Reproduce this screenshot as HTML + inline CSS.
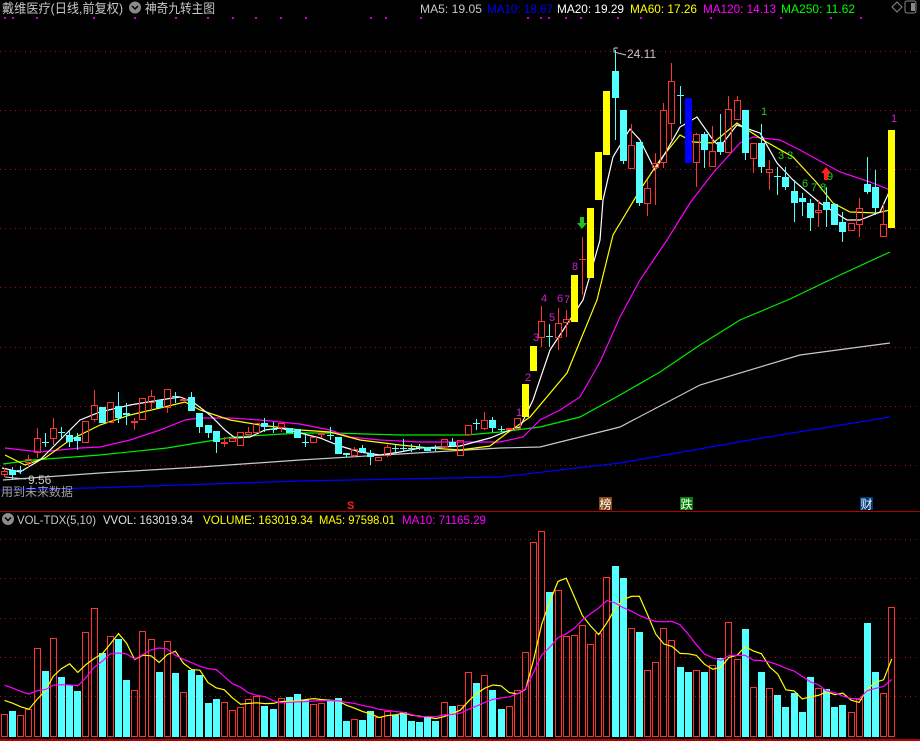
<!DOCTYPE html>
<html><head><meta charset="utf-8">
<style>
html,body{margin:0;padding:0;background:#000;width:920px;height:741px;overflow:hidden}
svg{display:block}
text{font-family:"Liberation Sans","Noto Sans CJK SC",sans-serif}
</style></head>
<body>
<svg id="s" width="920" height="741" xmlns="http://www.w3.org/2000/svg">
<rect width="920" height="741" fill="#000"/>
<g id="g"></g>
<!-- header -->
<text x="2" y="13" font-size="13" fill="#c8c8c8" textLength="121" lengthAdjust="spacingAndGlyphs">戴维医疗(日线,前复权)</text>
<circle cx="135" cy="7.5" r="6" fill="#8a8a8a"/><path d="M132 6 L135 9 L138 6" stroke="#000" stroke-width="1.5" fill="none"/>
<text x="145" y="13" font-size="13" fill="#c8c8c8" textLength="70" lengthAdjust="spacingAndGlyphs">神奇九转主图</text>
<text x="420" y="13" font-size="12" fill="#c8c8c8" textLength="62" lengthAdjust="spacingAndGlyphs">MA5: 19.05</text>
<text x="487" y="13" font-size="12" fill="#0000ff" textLength="66" lengthAdjust="spacingAndGlyphs">MA10: 18.67</text>
<text x="557" y="13" font-size="12" fill="#ffffff" textLength="67" lengthAdjust="spacingAndGlyphs">MA20: 19.29</text>
<text x="630" y="13" font-size="12" fill="#ffff00" textLength="67" lengthAdjust="spacingAndGlyphs">MA60: 17.26</text>
<text x="703" y="13" font-size="12" fill="#ff00ff" textLength="73" lengthAdjust="spacingAndGlyphs">MA120: 14.13</text>
<text x="781" y="13" font-size="12" fill="#00ff00" textLength="74" lengthAdjust="spacingAndGlyphs">MA250: 11.62</text>
<path d="M892 7 L897 2 L902 7 L897 12 Z" stroke="#888" fill="none"/>
<rect x="905" y="1" width="11" height="12" rx="2" stroke="#888" fill="none"/><rect x="911" y="3" width="4" height="8" fill="#888"/>
<!-- labels -->
<text x="627" y="58" font-size="12" fill="#c8c8c8">24.11</text>
<path d="M614 52 L626 55 M614 48 L618 48 M614 48 L614 52" stroke="#c8c8c8" fill="none"/>
<text x="28" y="484" font-size="12" fill="#c8c8c8">9.56</text>
<path d="M5 477 L26 479" stroke="#c8c8c8"/>
<text x="1" y="496" font-size="12" fill="#a0a0a0">用到未来数据</text>
<text x="347" y="509" font-size="11" fill="#ff2020" font-weight="bold">S</text>
<rect x="599" y="497" width="13" height="13" fill="#8b4a14"/><text x="599.5" y="508.5" font-size="12" fill="#fff">榜</text>
<rect x="680" y="497" width="13" height="13" fill="#008000"/><text x="680.5" y="508.5" font-size="12" fill="#fff">跌</text>
<rect x="860" y="497" width="13" height="13" fill="#003a78"/><text x="860.5" y="508.5" font-size="12" fill="#fff">财</text>
<line x1="0" y1="511.5" x2="920" y2="511.5" stroke="#b00000"/>
<circle cx="8" cy="519" r="6" fill="#8a8a8a"/><path d="M5 517.5 L8 520.5 L11 517.5" stroke="#000" stroke-width="1.5" fill="none"/>
<text x="17" y="524" font-size="12" fill="#c8c8c8" textLength="79" lengthAdjust="spacingAndGlyphs">VOL-TDX(5,10)</text>
<text x="103" y="524" font-size="12" fill="#e0e0e0" textLength="90" lengthAdjust="spacingAndGlyphs">VVOL: 163019.34</text>
<text x="203" y="524" font-size="12" fill="#ffff00" textLength="110" lengthAdjust="spacingAndGlyphs">VOLUME: 163019.34</text>
<text x="319" y="524" font-size="12" fill="#ffff00" textLength="76" lengthAdjust="spacingAndGlyphs">MA5: 97598.01</text>
<text x="402" y="524" font-size="12" fill="#ff00ff" textLength="84" lengthAdjust="spacingAndGlyphs">MA10: 71165.29</text>
<line x1="0" y1="740" x2="920" y2="740" stroke="#b00000" stroke-width="2"/>
<!-- signal labels -->
<g font-size="11" fill="#d020d0">
<text x="516" y="416">1</text><text x="525" y="381">2</text><text x="533" y="341">3</text>
<text x="541" y="302">4</text><text x="549" y="321">5</text><text x="557" y="302">6</text>
<text x="564" y="303">7</text><text x="572" y="270">8</text><text x="891" y="122">1</text>
</g>
<g font-size="11" fill="#20d020">
<text x="761" y="115">1</text><text x="778" y="159">3 3</text><text x="795" y="170">·</text>
<text x="802" y="187">6</text><text x="811" y="191">7 8</text><text x="827" y="180">9</text>
</g>
<path d="M826 167 L831 173 L828 173 L828 180 L824 180 L824 173 L821 173 Z" fill="#ff2020"/>
<path d="M582 229 L577 223 L580 223 L580 217 L584 217 L584 223 L587 223 Z" fill="#20c020"/>
</svg>
<script>
var NS="http://www.w3.org/2000/svg",g=document.getElementById('g');
function el(n,a){var e=document.createElementNS(NS,n);for(var k in a)e.setAttribute(k,a[k]);g.appendChild(e);return e;}
[51,110,169,228,287,347,406,465,539,578,618,657,696].forEach(function(y){el('line',{x1:0,y1:y+.5,x2:920,y2:y+.5,stroke:'#a01010','stroke-dasharray':'1 4'});});
[4,12,36,93,134,175,207,232,255,280,305,370,385,420,527,540,548,565,580,617,640,710,780,830,860].forEach(function(x){el('rect',{x:x,y:17,width:2,height:2,fill:'#d000d0'});});
function pl(pts,c){el('polyline',{points:pts.map(function(p){return p.join(',')}).join(' '),fill:'none',stroke:c,'stroke-width':1.2});}
pl([[0,490],[90,488],[300,481],[500,477],[620,463],[750,440],[890,417]],'#0000ff');
pl([[3,480],[100,473],[200,467],[300,460],[400,454],[500,448],[540,447],[620,427],[700,385],[800,355],[890,343]],'#c8c8c8');
pl([[3,464],[33,460],[100,455],[167,448],[233,437],[300,433],[333,433],[400,435],[467,435],[500,432],[540,427],[580,417],[620,395],[660,372],[700,345],[740,320],[790,299],[840,275],[890,252]],'#00ee00');
pl([[5,448],[40,452],[80,448],[100,447],[130,440],[160,430],[185,420],[200,418],[230,418],[260,420],[300,424],[330,430],[350,437],[380,440],[420,442],[460,442],[500,442],[523,437],[540,420],[560,410],[580,397],[600,362],[620,317],[640,280],[667,240],[690,203],[713,173],[740,143],[753,137],[780,140],[800,150],[840,172],[870,182],[890,190]],'#ff00ff');
pl([[5,455],[25,465],[45,458],[70,440],[100,425],[130,415],[160,408],[185,402],[200,410],[230,420],[260,425],[300,430],[330,432],[360,440],[400,445],[430,448],[460,450],[490,446],[507,433],[530,417],[567,373],[597,300],[613,235],[640,190],[660,160],[680,135],[693,142],[713,143],[737,123],[763,140],[793,157],[817,183],[833,203],[850,212],[877,213],[890,210]],'#ffff00');
pl([[2,468],[20,472],[40,460],[60,440],[80,420],[100,412],[130,405],[160,400],[180,397],[193,402],[210,415],[225,430],[235,438],[250,437],[265,430],[280,428],[300,433],[320,438],[340,446],[360,452],[380,455],[400,452],[420,448],[460,446],[490,438],[510,430],[520,427],[533,400],[550,350],[583,300],[600,240],[603,200],[613,157],[630,129],[640,140],[655,170],[667,150],[680,127],[697,117],[713,140],[720,147],[733,130],[737,125],[760,133],[777,163],[793,180],[820,203],[847,220],[860,220],[880,212],[890,190]],'#ffffff');
var C=`0 r 471 475 468 477
1 c 470 475 467 480
2 c 470 471 466 474
3 r 459 463 455 467
4 r 438 453 428 458
5 c 442 443 433 447
6 r 428 439 418 445
7 c 432 433 427 438
8 c 435 442 430 447
9 c 437 441 433 450
10 r 421 443
11 r 405 420 390 422
12 c 407 423
13 r 402 423
14 c 406 418 392 423
15 c 413 415 403 425
16 r 421 423 418 430
17 r 398 420
18 r 396 403 390 410
19 c 400 408
20 r 389 408 389 413
21 c 396 397 392 403
22 r 399 401
23 c 397 411 392 411
24 c 413 427 413 433
25 c 425 433 425 438
26 c 431 442 431 453
27 r 442 444 437 447
28 r 438 442
29 r 432 446
30 r 432 435 427 435
31 r 423 433
32 c 423 427 418 432
33 c 429 430 422 433
34 r 423 428 422 432
35 c 428 433
36 c 429 438
37 c 442 443 433 447
38 r 437 443
39 r 433 435 433 438
40 c 435 436 427 440
41 c 437 454
42 c 453 455 453 457
43 r 449 456 447 457
44 c 448 452 445 453
45 c 453 457 450 465
46 r 457 461
47 r 447 456 445 457
48 c 448 449 445 452
49 c 448 449 439 451
50 c 448 449 444 452
51 c 447 448 444 450
52 c 447 451
53 c 448 449 445 451
54 r 439 447
55 c 442 446 438 447
56 r 440 456
57 r 425 435
58 c 423 424 419 430
59 r 420 429 412 430
60 c 420 428 417 432
61 c 429 430 426 432
62 r 428 430
63 r 418 429
64 y 384 417
65 y 346 371
66 r 321 338 306 347
67 c 336 337 324 347
68 r 323 338 308 350
69 r 319 323 310 337
70 y 275 322
71 r 259 260 237 295
72 y 208 278
73 y 152 200
74 y 91 155
75 c 71 98 50 140
76 c 110 161 110 164
77 r 145 169 124 169
78 c 142 203 142 206
79 r 188 204 180 216
80 r 163 168 153 205
81 r 110 163 103 168
82 r 81 124 63 140
83 c 95 96 86 124
84 b 98 163
85 r 134 163 133 187
86 c 134 150 132 168
87 r 151 167 126 167
88 c 142 152 114 155
89 r 109 153 96 153
90 r 100 120 96 120
91 c 110 153 110 160
92 r 143 159 143 173
93 c 143 167 124 173
94 r 169 173 160 190
95 c 176 177 167 195
96 c 177 187 167 190
97 c 191 203 180 222
98 c 198 202 193 216
99 c 203 218 199 231
100 r 210 213 200 227
101 c 202 210 187 227
102 c 204 225
103 c 222 232 212 242
104 r 223 231
105 r 208 225 198 237
106 c 184 192 157 194
107 c 187 208 170 215
108 r 224 237 204 237
109 y 130 228`;
var col={r:'#ff3232',c:'#54ffff',y:'#ffff00',b:'#0000ff'};
C.split('\n').forEach(function(l){var a=l.trim().split(/\s+/);var i=+a[0],t=a[1],bt=+a[2],bb=+a[3],wt=a[4]?+a[4]:bt,wb=a[5]?+a[5]:bb;
 var x=Math.round(1+8.14*i),cx=x+3.5,c=col[t];
 if(wt<bt)el('line',{x1:cx,y1:wt,x2:cx,y2:bt,stroke:c});
 if(wb>bb)el('line',{x1:cx,y1:bb,x2:cx,y2:wb,stroke:c});
 if(t=='r'){ if(bb-bt<=2)el('rect',{x:x,y:bt,width:7,height:Math.max(1,bb-bt),fill:c});
  else el('rect',{x:x+.5,y:bt+.5,width:6,height:bb-bt-1,fill:'none',stroke:c});}
 else el('rect',{x:x,y:bt,width:7,height:Math.max(1,bb-bt),fill:c});
});
var V=[['r',714],['c',711],['r',715],['r',709],['r',648],['c',671],['r',638],['c',677],['c',685],['c',691],['r',632],['r',608],['c',653],['r',636],['c',639],['c',680],['r',690],['r',631],['r',639],['c',672],['r',641],['c',673],['r',692],['c',670],['c',675],['c',703],['c',699],['r',702],['r',710],['r',707],['r',699],['r',696],['c',706],['c',709],['r',698],['c',697],['c',694],['c',700],['r',704],['r',703],['c',700],['c',698],['c',721],['r',719],['c',720],['c',711],['r',717],['r',711],['c',715],['c',712],['c',721],['c',722],['c',717],['c',721],['r',702],['c',706],['r',705],['r',672],['c',683],['r',675],['c',690],['c',709],['r',706],['r',690],['r',652],['r',542],['r',531],['c',592],['r',590],['r',636],['r',635],['r',625],['r',644],['r',633],['r',577],['c',566],['c',578],['r',628],['c',632],['r',670],['r',662],['r',628],['r',640],['c',667],['c',672],['r',670],['c',672],['r',665],['c',658],['r',622],['r',659],['c',629],['r',687],['c',672],['r',688],['c',695],['c',707],['c',693],['c',712],['c',677],['r',688],['c',689],['c',707],['c',705],['r',712],['r',699],['c',623],['c',672],['r',693],['r',607]];
var B=737,h=V.map(function(v){return B-v[1]});
V.forEach(function(v,i){var x=Math.round(1+8.14*i);
 if(v[0]=='r')el('rect',{x:x+.5,y:v[1]+.5,width:6,height:B-v[1]-1,fill:'none',stroke:'#ff3232'});
 else el('rect',{x:x,y:v[1],width:7,height:B-v[1],fill:'#54ffff'});});
function ma(n,c){var p=[];for(var i=0;i<h.length;i++){var s=0,k=0;for(var j=Math.max(0,i-n+1);j<=i;j++){s+=h[j];k++;}
 var pre=(n-k)*(n==5?40:55);p.push([(1+8.14*i+3.5).toFixed(1),(B-(s+pre)/n).toFixed(1)]);}
 el('polyline',{points:p.map(function(q){return q.join(',')}).join(' '),fill:'none',stroke:c,'stroke-width':1.2});}
ma(5,'#ffff00');ma(10,'#ff00ff');
</script>
</body></html>
